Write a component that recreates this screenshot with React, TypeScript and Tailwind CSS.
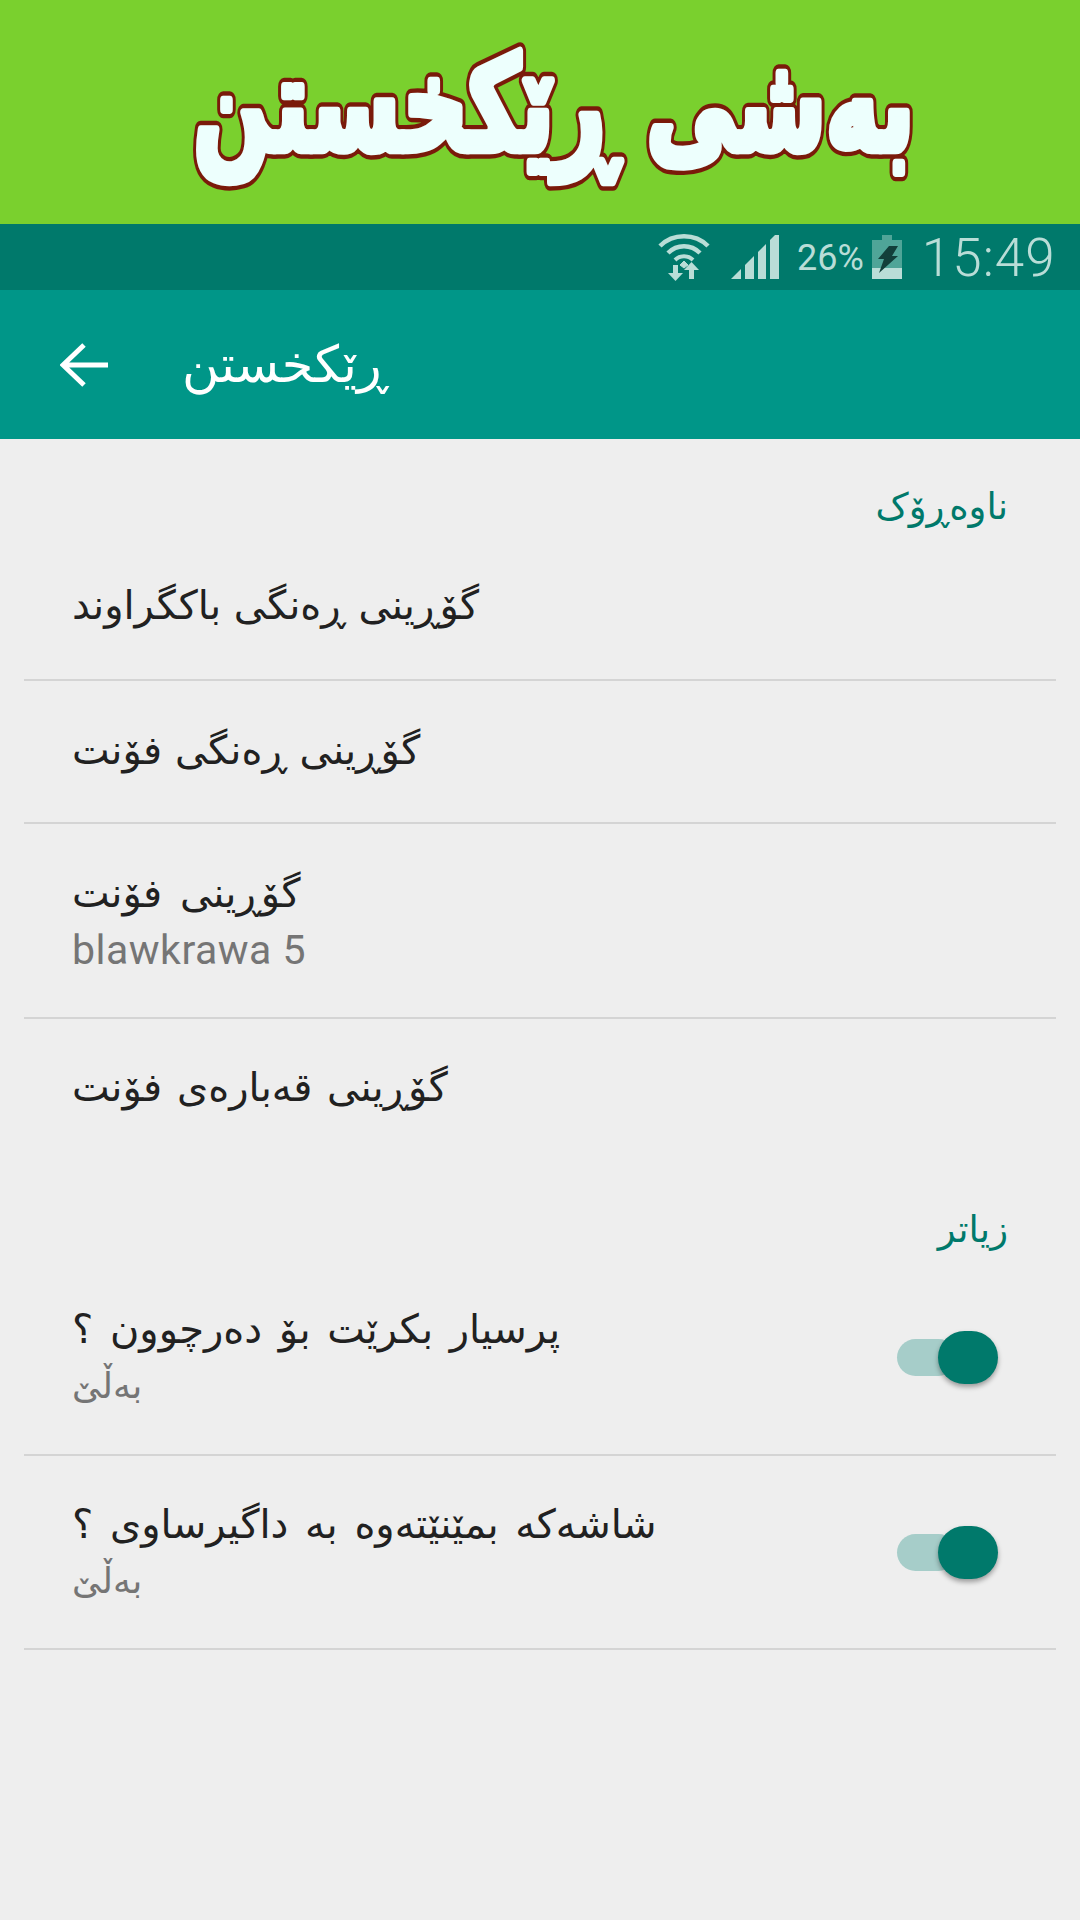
const ARABIC = '"DejaVu Sans", "Liberation Sans", sans-serif';

function Wifi() {
  return (
    <svg width="54" height="50" viewBox="0 0 54 50" fill="none" stroke="#b9ddd7">
      <path d="M3 14 C16 1 38 1 51 14" strokeWidth="4.5" />
      <path d="M11 21 C20 12 34 12 43 21" strokeWidth="4.5" />
      <path d="M18 28 C23 23 31 23 36 28" strokeWidth="4" />
      <path d="M23 33 L27 29 L31 33 L27 36Z" fill="#b9ddd7" strokeWidth="1" />
      <path d="M21 33v8h5l-7.500 8-7.500-8h5v-8z" fill="#b9ddd7" stroke="none" />
      <path d="M32 47v-9h-5l7.500-8 7.500 8h-5v9z" fill="#b9ddd7" stroke="none" />
    </svg>
  );
}

function Signal() {
  return (
    <svg width="48" height="44" viewBox="0 0 48 44" fill="#b9ddd7">
      <path d="M0 44 L10 34 V44 Z" />
      <path d="M14 30 L23 21 V44 H14 Z" />
      <path d="M27 17 L35 9 V44 H27 Z" />
      <path d="M39 5 L48 -4 V44 H39 Z" />
    </svg>
  );
}

function Battery() {
  return (
    <svg width="30" height="44" viewBox="0 0 30 44">
      <path d="M10 0h10v5h10v39H0V5h10z" fill="#4fa598" />
      <path d="M0 33h30v11H0z" fill="#b9ddd7" />
      <path d="M17 11h9l-6 10h6L7 38l5-14H6z" fill="#123f3a" />
    </svg>
  );
}

function Toggle() {
  return (
    <div className="relative h-[53px] w-[101px] shrink-0">
      <div className="absolute left-0 top-[8px] h-[37px] w-[60px] rounded-full bg-[#a6cdc9]" />
      <div className="absolute left-[41px] top-0 h-[53px] w-[60px] rounded-full bg-[#00796b] shadow-[0_3px_5px_rgba(0,0,0,0.35)]" />
    </div>
  );
}

function Divider() {
  return <div className="mx-[24px] h-[2px] bg-[#d4d4d4]" />;
}

function Heading({ children, className }: { children: string; className: string }) {
  return (
    <div dir="rtl" className={`pl-[72px] pr-[72px] text-[37px] leading-[44px] text-[#00796b] ${className}`}>
      <span>{children}</span>
    </div>
  );
}

function Row({ title, sub, toggle, latin, className, titleClass = '' }: { title: string; sub?: string; toggle?: boolean; latin?: boolean; className: string; titleClass?: string }) {
  return (
    <div className={`flex items-center justify-between pl-[72px] pr-[82px] ${className}`}>
      <div className="flex flex-col items-start">
        <div dir="rtl" className={`text-[40px] leading-[50px] text-[#212121] ${titleClass}`}>{title}</div>
        {sub && (
          <div
            className="mt-[8px] text-[36px] leading-[48px] text-[#757575]"
            dir={latin ? 'ltr' : 'rtl'}
            style={latin ? { fontFamily: 'Roboto, sans-serif', letterSpacing: '0.5px', fontSize: '41px' } : undefined}
          >
            {sub}
          </div>
        )}
      </div>
      {toggle && <Toggle />}
    </div>
  );
}

export default function App() {
  return (
    <div className="flex h-[1920px] w-[1080px] flex-col overflow-hidden bg-[#eeeeee]" style={{ fontFamily: ARABIC }}>
      <div className="h-[224px] bg-[#7ad02e]">
        <svg width="1080" height="224" viewBox="0 0 1080 224" className="block">
          <g transform="translate(554 150) scale(1 1.45)" fontSize="90" fontWeight="700" textAnchor="middle" direction="rtl" strokeLinejoin="round">
            <text fill="#7a1a0a" stroke="#7a1a0a" strokeWidth="12">بەشی ڕێکخستن</text>
            <text fill="#edfffd" stroke="#edfffd" strokeWidth="6">بەشی ڕێکخستن</text>
          </g>
        </svg>
      </div>

      <div className="flex h-[66px] items-center bg-[#00796b] pl-[657px]">
        <Wifi />
        <div className="ml-[20px]"><Signal /></div>
        <span className="ml-[18px] mt-[2px] text-[36px] leading-none text-[#b9ddd7]" style={{ fontFamily: 'Roboto, sans-serif' }}>26%</span>
        <div className="ml-[8px]"><Battery /></div>
        <span className="ml-[20px] mt-[2px] text-[53px] leading-none tracking-[1px] text-[#b9ddd7]" style={{ fontFamily: 'Roboto, sans-serif', fontWeight: 300 }}>15:49</span>
      </div>

      <div className="flex h-[149px] items-center bg-[#009688] pl-[60px]">
        <svg width="50" height="44" viewBox="0 0 50 44" fill="none" stroke="white" strokeWidth="5">
          <path d="M48 22H5M24 2 3 22l21 20" />
        </svg>
        <span dir="rtl" className="ml-[72px] text-[51px] leading-none text-white">ڕێکخستن</span>
      </div>

      <Heading className="mt-[46px]">ناوەڕۆک</Heading>
      <Row title="گۆڕینی ڕەنگی باکگراوند" className="mt-[1px] h-[149px]" />
      <Divider />
      <Row title="گۆڕینی ڕەنگی فۆنت" className="h-[141px] pb-[4px]" />
      <Divider />
      <Row title="گۆڕینی فۆنت" sub="blawkrawa 5" latin className="h-[193px]" titleClass="[word-spacing:5px]" />
      <Divider />
      <Row title="گۆڕینی قەبارەی فۆنت" className="h-[136px]" titleClass="[word-spacing:2px]" />

      <Heading className="mt-[53px]">زیاتر</Heading>
      <Row title="پرسیار بکرێت بۆ دەرچوون ؟" sub="بەڵێ" toggle className="mt-[8px] h-[194px]" titleClass="[word-spacing:4px]" />
      <Divider />
      <Row title="شاشەکە بمێنێتەوە بە داگیرساوی ؟" sub="بەڵێ" toggle className="h-[192px]" titleClass="[word-spacing:4px]" />
      <Divider />
    </div>
  );
}
